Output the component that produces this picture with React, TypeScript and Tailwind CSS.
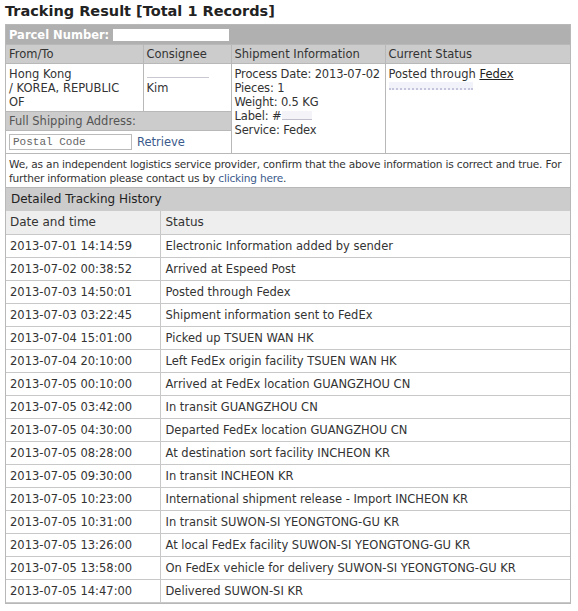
import React from "react";

const rows: [string, string][] = [
  ["2013-07-01 14:14:59", "Electronic Information added by sender"],
  ["2013-07-02 00:38:52", "Arrived at Espeed Post"],
  ["2013-07-03 14:50:01", "Posted through Fedex"],
  ["2013-07-03 03:22:45", "Shipment information sent to FedEx"],
  ["2013-07-04 15:01:00", "Picked up TSUEN WAN HK"],
  ["2013-07-04 20:10:00", "Left FedEx origin facility TSUEN WAN HK"],
  ["2013-07-05 00:10:00", "Arrived at FedEx location GUANGZHOU CN"],
  ["2013-07-05 03:42:00", "In transit GUANGZHOU CN"],
  ["2013-07-05 04:30:00", "Departed FedEx location GUANGZHOU CN"],
  ["2013-07-05 08:28:00", "At destination sort facility INCHEON KR"],
  ["2013-07-05 09:30:00", "In transit INCHEON KR"],
  ["2013-07-05 10:23:00", "International shipment release - Import INCHEON KR"],
  ["2013-07-05 10:31:00", "In transit SUWON-SI YEONGTONG-GU KR"],
  ["2013-07-05 13:26:00", "At local FedEx facility SUWON-SI YEONGTONG-GU KR"],
  ["2013-07-05 13:58:00", "On FedEx vehicle for delivery SUWON-SI YEONGTONG-GU KR"],
  ["2013-07-05 14:47:00", "Delivered SUWON-SI KR"],
];

export default function App() {
  return (
    <div
      className="w-[578px] h-[611px] bg-white px-[5px] pt-[1px] text-[#333] text-[11.5px] leading-[14px]"
      style={{ fontFamily: '"DejaVu Sans", Verdana, sans-serif' }}
    >
      <h1 className="text-[14.5px] leading-[20px] font-bold text-[#222] mb-[3px]">
        Tracking Result [Total 1 Records]
      </h1>
      <div className="w-[566px] border border-[#b8b8b8]">
        <div className="h-[20px] bg-[#b0b0b0] flex items-center px-[3px] text-white font-bold border-b border-[#b8b8b8]">
          <span>Parcel Number:</span>
          <span className="ml-[4px] inline-block w-[116px] h-[12px] bg-white" />
        </div>
        <table className="w-full border-collapse table-fixed">
          <colgroup>
            <col className="w-[137px]" />
            <col className="w-[88px]" />
            <col className="w-[154px]" />
            <col />
          </colgroup>
          <tbody>
            <tr className="bg-[#cccccc] h-[18px]">
              <td className="border-r border-b border-[#b8b8b8] px-[3px] py-0">From/To</td>
              <td className="border-r border-b border-[#b8b8b8] px-[3px] py-0">Consignee</td>
              <td className="border-r border-b border-[#b8b8b8] px-[3px] py-0">Shipment Information</td>
              <td className="border-b border-[#b8b8b8] px-[3px] py-0">Current Status</td>
            </tr>
            <tr>
              <td className="border-r border-b border-[#b8b8b8] px-[3px] pt-[3px] pb-[2px] align-top">
                Hong Kong
                <br />/ KOREA, REPUBLIC
                <br />OF
              </td>
              <td className="border-r border-b border-[#b8b8b8] px-[3px] pt-[3px] align-top">
                <span className="block w-[62px] h-[10px] mt-[1px] mb-[3px] bg-white border-b border-[#c8c8d0]" />
                Kim
              </td>
              <td
                rowSpan={3}
                className="border-r border-b border-[#b8b8b8] pl-[3px] pr-0 pt-[3px] align-top whitespace-nowrap tracking-[-0.15px]"
              >
                Process Date: 2013-07-02
                <br />Pieces: 1
                <br />Weight: 0.5 KG
                <br />Label: #
                <span className="inline-block w-[30px] h-[9px] bg-[#f4f4f8] border-b border-[#c0c0cc]" />
                <br />Service: Fedex
              </td>
              <td rowSpan={3} className="border-b border-[#b8b8b8] px-[3px] pt-[3px] align-top">
                Posted through <span className="underline text-[#222]">Fedex</span>
                <span className="block w-[84px] h-[8px] mt-[1px] bg-[#f2f2fa] border-b-2 border-dotted border-[#c4c4dc]" />
              </td>
            </tr>
            <tr className="bg-[#cccccc] h-[19px]">
              <td colSpan={2} className="border-r border-b border-[#b8b8b8] px-[3px] py-0 text-[#555]">
                Full Shipping Address:
              </td>
            </tr>
            <tr className="h-[23px]">
              <td colSpan={2} className="border-r border-b border-[#b8b8b8] px-[3px] py-0">
                <div className="flex items-center gap-[5px]">
                  <div
                    className="w-[123px] h-[16px] border border-[#bbb] px-[3px] text-[11px] leading-[14px] text-[#666]"
                    style={{ fontFamily: '"Liberation Mono", "Courier New", monospace' }}
                  >
                    Postal Code
                  </div>
                  <span className="text-[#3b5a8c]">Retrieve</span>
                </div>
              </td>
            </tr>
          </tbody>
        </table>
        <div className="px-[3px] pt-[3px] h-[34px] border-b border-[#b8b8b8] text-[10.6px] tracking-[-0.2px] whitespace-nowrap overflow-hidden">
          We, as an independent logistics service provider, confirm that the above information is correct and true. For
          <br />
          further information please contact us by <span className="text-[#3b5a8c]">clicking here</span>.
        </div>
        <div className="h-[23px] bg-[#cccccc] flex items-center px-[5px] text-[12px] text-[#222]">
          Detailed Tracking History
        </div>
        <table className="w-full border-collapse table-fixed">
          <colgroup>
            <col className="w-[154px]" />
            <col />
          </colgroup>
          <tbody>
            <tr className="h-[24px] bg-[#eeeeee] text-[12px]">
              <td className="border-r border-b border-[#c8c8c8] px-[4px] py-0">Date and time</td>
              <td className="border-b border-[#c8c8c8] px-[5px] py-0">Status</td>
            </tr>
            {rows.map(([d, s], i) => (
              <tr key={i} className="h-[23px]">
                <td className="border-r border-b border-[#c8c8c8] px-[4px] py-0">{d}</td>
                <td className="border-b border-[#c8c8c8] px-[5px] py-0">{s}</td>
              </tr>
            ))}
          </tbody>
        </table>
      </div>
    </div>
  );
}
